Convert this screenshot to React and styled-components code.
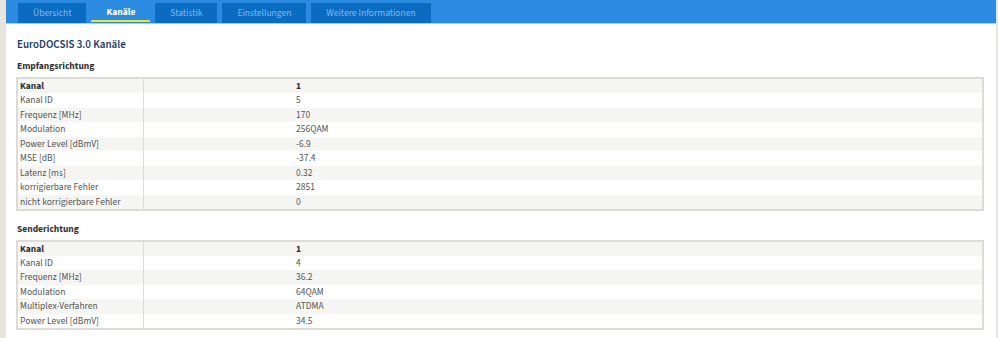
import styled, { createGlobalStyle } from 'styled-components'

const sans = '"Source Sans 3", "Source Sans Pro", Lato, sans-serif'

const GlobalStyle = createGlobalStyle`
  html, body {
    margin: 0;
    padding: 0;
    background: #e7e5de;
    font-family: ${sans};
  }
`

const tabs = ['Übersicht', 'Kanäle', 'Statistik', 'Einstellungen', 'Weitere Informationen']

const downstream = [
  ['Kanal', '1'],
  ['Kanal ID', '5'],
  ['Frequenz [MHz]', '170'],
  ['Modulation', '256QAM'],
  ['Power Level [dBmV]', '-6.9'],
  ['MSE [dB]', '-37.4'],
  ['Latenz [ms]', '0.32'],
  ['korrigierbare Fehler', '2851'],
  ['nicht korrigierbare Fehler', '0'],
]

const upstream = [
  ['Kanal', '1'],
  ['Kanal ID', '4'],
  ['Frequenz [MHz]', '36.2'],
  ['Modulation', '64QAM'],
  ['Multiplex-Verfahren', 'ATDMA'],
  ['Power Level [dBmV]', '34.5'],
]

const Frame = styled.div`
  margin: 0 2px 0 6px;
  min-height: 338px;
  background: #fff;
`

const TabBar = styled.nav`
  display: flex;
  align-items: flex-start;
  gap: 5px;
  height: 24px;
  box-sizing: border-box;
  padding: 3px 0 0 12px;
  background: #2a8be0;
  border-bottom: 1px solid #a3cbef;
`

const Tab = styled.div`
  box-sizing: border-box;
  height: ${p => (p.active ? '19px' : '20px')};
  padding: 0 15px;
  display: flex;
  align-items: center;
  font-family: ${sans};
  font-size: 9.5px;
  font-weight: ${p => (p.active ? 700 : 400)};
  color: ${p => (p.active ? '#fff' : '#86b6e6')};
  background: ${p => (p.active ? 'transparent' : '#0a6cc1')};
  border-bottom: ${p => (p.active ? '2px solid #f2e51a' : 'none')};
`

const Content = styled.main`
  padding: 13px 12px 0 10px;
`

const Title = styled.h1`
  margin: 0 0 6px 1px;
  font-family: ${sans};
  font-size: 11px;
  line-height: 16px;
  font-weight: 600;
  color: #1b3c6b;
`

const SectionTitle = styled.h2`
  margin: 0 0 4px 1px;
  font-family: ${sans};
  font-size: 9.5px;
  line-height: 14px;
  font-weight: 700;
  color: #333;
`

const Table = styled.table`
  width: 100%;
  border-collapse: collapse;
  border: 2px solid #dcdbd6;
  margin-bottom: ${p => p.gap || 0}px;
  font-family: ${sans};
  font-size: 9.5px;
  color: #555;
`

const Row = styled.tr`
  height: 14.5px;
  background: ${p => (p.striped ? '#f5f5f3' : '#fff')};
  font-weight: ${p => (p.head ? 700 : 400)};
  color: ${p => (p.head ? '#333' : '#555')};
`

const Label = styled.td`
  width: 123px;
  padding: 0 0 0 2px;
  border-right: 1px solid #dcdbd6;
  line-height: 14px;
  white-space: nowrap;
`

const Value = styled.td`
  padding: 0 0 0 152px;
  line-height: 14px;
`

function ChannelTable({ rows, gap }) {
  return (
    <Table gap={gap}>
      <tbody>
        {rows.map(([label, value], i) => (
          <Row key={label} striped={i % 2 === 0} head={i === 0}>
            <Label>{label}</Label>
            <Value>{value}</Value>
          </Row>
        ))}
      </tbody>
    </Table>
  )
}

export default function App() {
  return (
    <>
      <GlobalStyle />
      <Frame>
        <TabBar>
          {tabs.map(t => (
            <Tab key={t} active={t === 'Kanäle'}>{t}</Tab>
          ))}
        </TabBar>
        <Content>
          <Title>EuroDOCSIS 3.0 Kanäle</Title>
          <SectionTitle>Empfangsrichtung</SectionTitle>
          <ChannelTable rows={downstream} gap={11} />
          <SectionTitle>Senderichtung</SectionTitle>
          <ChannelTable rows={upstream} />
        </Content>
      </Frame>
    </>
  )
}
